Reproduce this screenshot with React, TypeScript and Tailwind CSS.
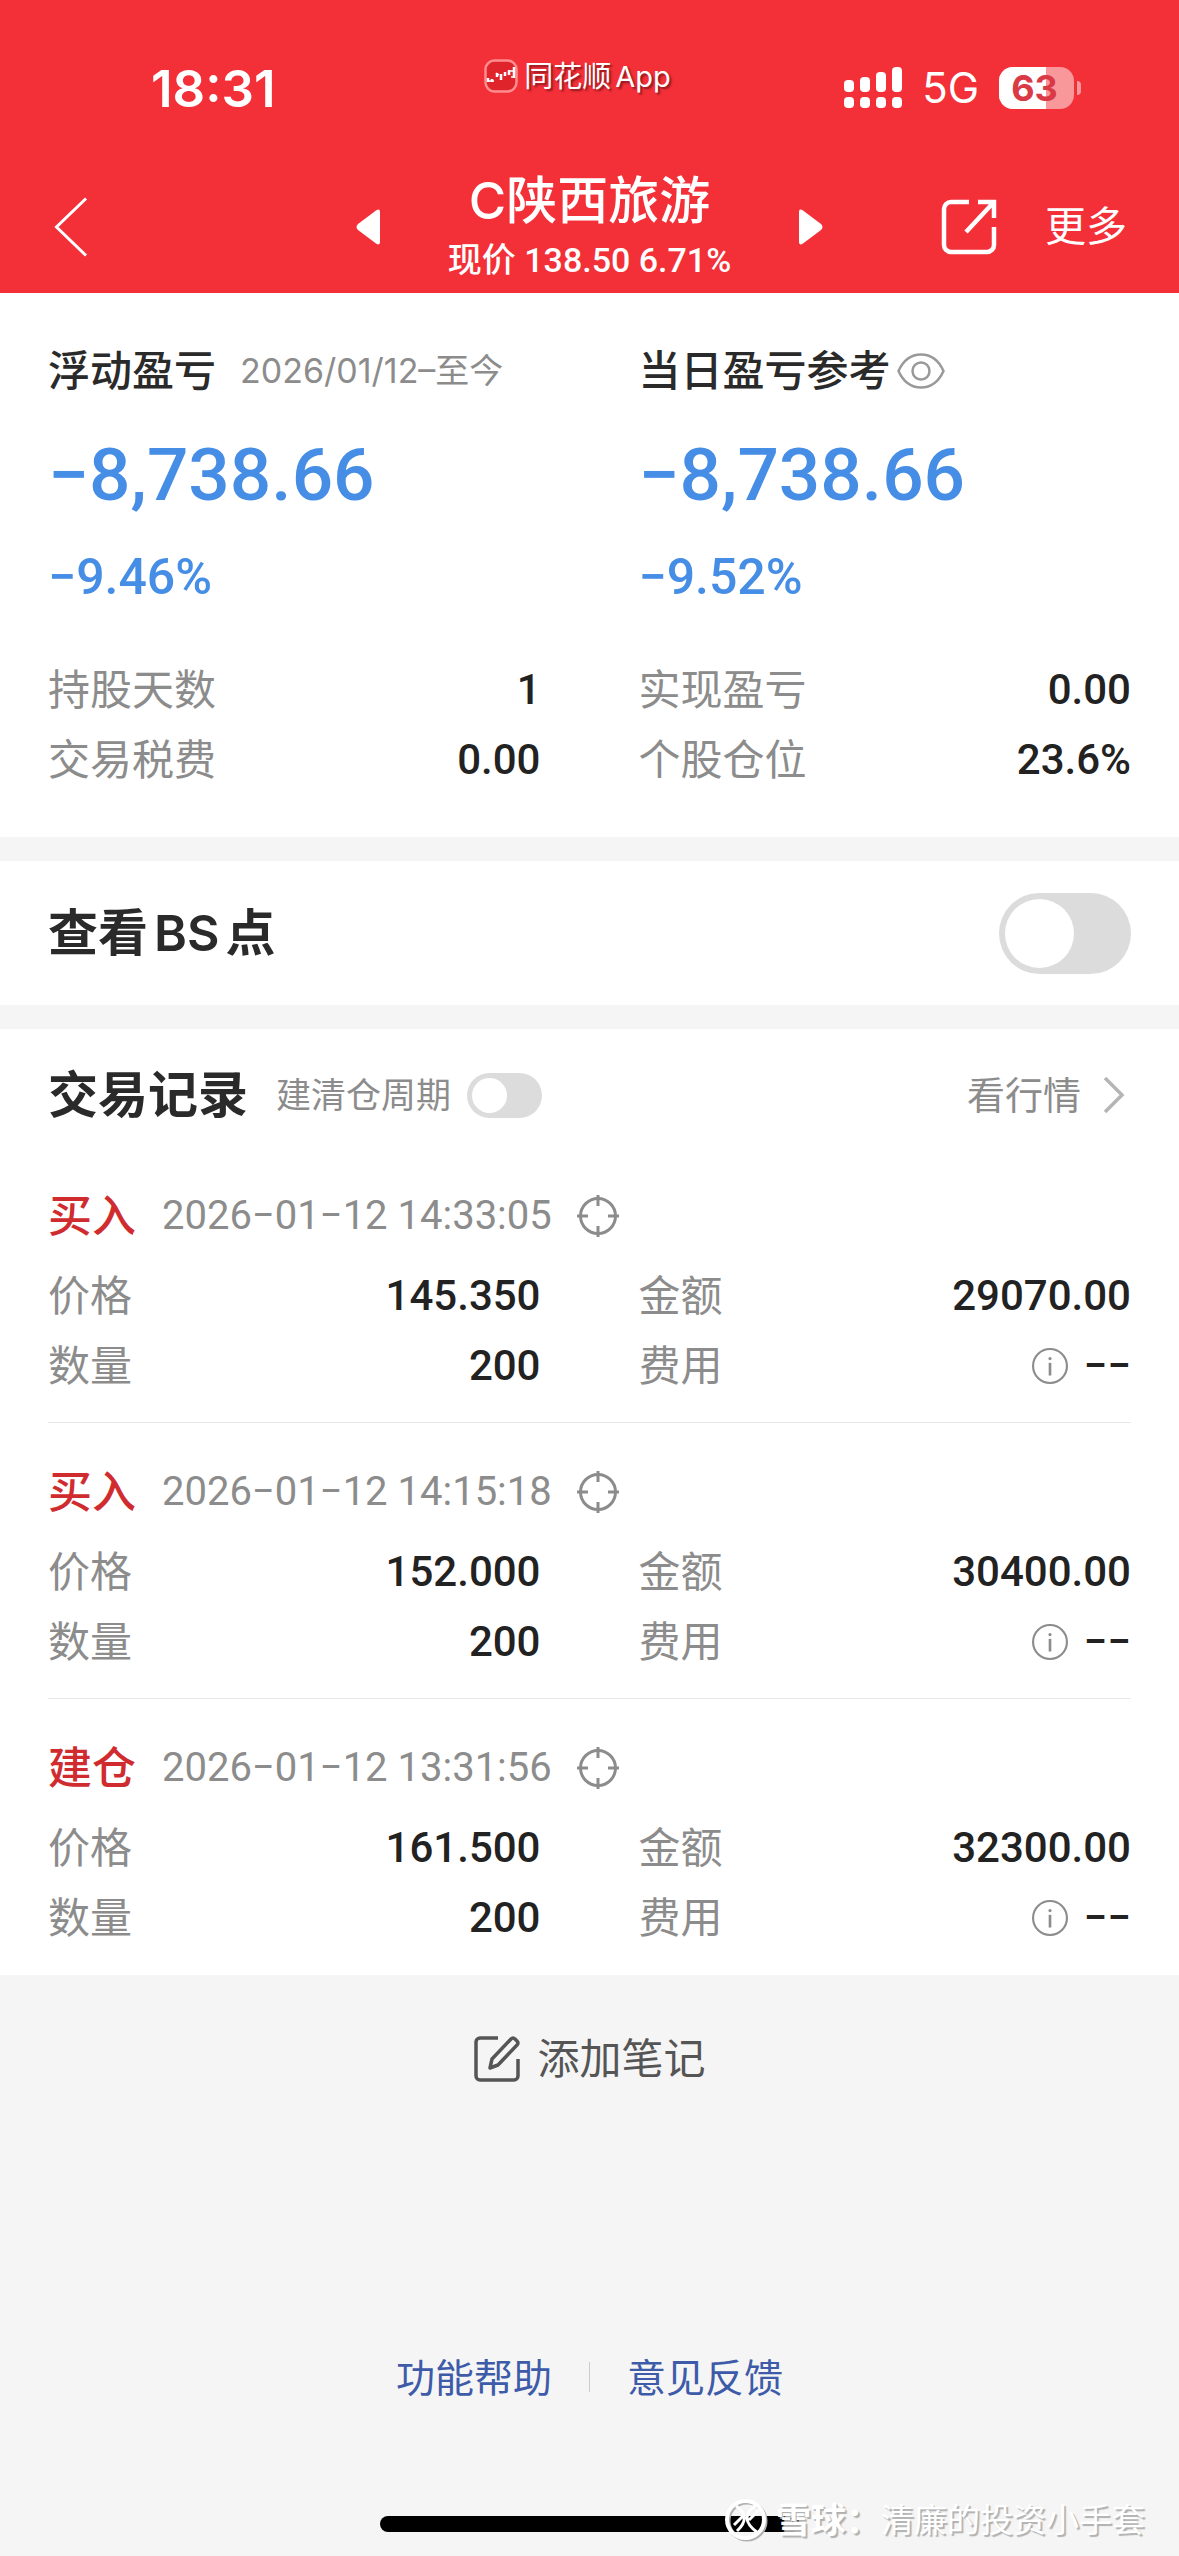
import { useState } from 'react';

interface StatItem {
  label: string;
  value: string;
}

interface TradeRecord {
  type: string;
  time: string;
  price: string;
  amount: string;
  quantity: string;
  fee: string;
}

const stats: StatItem[] = [
  { label: '持股天数', value: '1' },
  { label: '实现盈亏', value: '0.00' },
  { label: '交易税费', value: '0.00' },
  { label: '个股仓位', value: '23.6%' },
];

const records: TradeRecord[] = [
  { type: '买入', time: '2026−01−12 14:33:05', price: '145.350', amount: '29070.00', quantity: '200', fee: '−−' },
  { type: '买入', time: '2026−01−12 14:15:18', price: '152.000', amount: '30400.00', quantity: '200', fee: '−−' },
  { type: '建仓', time: '2026−01−12 13:31:56', price: '161.500', amount: '32300.00', quantity: '200', fee: '−−' },
];

function AppLogo() {
  return (
    <svg width="34" height="34" viewBox="0 0 34 34" fill="none">
      <rect x="1.5" y="1.5" width="31" height="31" rx="9" fill="#e0242b" stroke="#ff8d8f" strokeWidth="2.5" />
      <path
        d="M4 19v4M8 20v3M13 14v4M17 15v6M21 13v4M25 11v5M30 8v11"
        stroke="#fff"
        strokeWidth="2.5"
      />
      <path d="M3 22h7M12 14l3 2M24 12h5M27 18h4" stroke="#fff" strokeWidth="1.500" />
    </svg>
  );
}

function SignalIcon() {
  return (
    <svg width="58" height="42" viewBox="0 0 58 42" fill="#fff">
      <rect x="0" y="13" width="10" height="12" rx="4" />
      <rect x="16" y="10" width="10" height="15" rx="4" />
      <rect x="32" y="5" width="10" height="20" rx="4" />
      <rect x="48" y="0" width="10" height="25" rx="4" />
      <rect x="0" y="30" width="10" height="11" rx="4" />
      <rect x="16" y="30" width="10" height="11" rx="4" />
      <rect x="32" y="30" width="10" height="11" rx="4" />
      <rect x="48" y="30" width="10" height="11" rx="4" />
    </svg>
  );
}

function Battery({ level }: { level: number }) {
  return (
    <div className="flex items-center gap-[3px]">
      <div className="relative w-[75px] h-[42px] rounded-[14px] overflow-hidden bg-[#f9989b]">
        <div className="h-full bg-white" style={{ width: `${level}%` }} />
        <span className="absolute inset-0 flex items-center justify-center pr-1 text-[36px] leading-none font-bold text-[#d93a45]">
          {level}
        </span>
      </div>
      <div className="w-[4px] h-[14px] rounded-r-full bg-[#f9989b]" />
    </div>
  );
}

function EyeIcon() {
  return (
    <svg width="48" height="36" viewBox="0 0 48 36" fill="none" stroke="#999" strokeWidth="2.500">
      <path d="M1.500 18C6 8 14 1.500 24 1.500S42 8 46.500 18C42 28 34 34.500 24 34.500S6 28 1.500 18z" />
      <circle cx="24" cy="18" r="8.500" />
    </svg>
  );
}

function TargetIcon() {
  return (
    <svg width="44" height="44" viewBox="0 0 44 44" fill="none" stroke="#8c8c8c" strokeWidth="3">
      <circle cx="22" cy="22" r="17.500" />
      <path d="M22 1v11M22 32v11M1 22h11M32 22h11" />
    </svg>
  );
}

function InfoIcon() {
  return (
    <svg width="36" height="36" viewBox="0 0 34 34" fill="none" stroke="#8c8c8c" strokeWidth="2">
      <circle cx="17" cy="17" r="16" />
      <path d="M17 14v12" strokeWidth="2.500" />
      <circle cx="17" cy="10" r="1.500" fill="#8c8c8c" stroke="none" />
    </svg>
  );
}

function StatRow({ label, children }: { label: string; children: React.ReactNode }) {
  return (
    <div className="flex items-center justify-between h-[70px] text-[42px] leading-none">
      <dt className="text-[#8c8c8c]">{label}</dt>
      <dd className="flex items-center gap-4 font-[Roboto,sans-serif] font-medium text-[#222]">
        {children}
      </dd>
    </div>
  );
}

export default function App() {
  const [showPoints, setShowPoints] = useState(false);
  const [showCycle, setShowCycle] = useState(false);

  return (
    <div className="relative min-h-screen flex flex-col bg-[#f5f5f5] text-[#2a2a2a] font-[Inter,'Noto_Sans_CJK_SC',sans-serif]">
      <header className="bg-[#f32f38] text-white">
        <div className="grid grid-cols-[1fr_auto_1fr] items-center h-[176px]">
          <span className="pl-[151px] text-[51px] leading-none font-semibold">18:31</span>
          <div className="flex items-center gap-[6px] pr-6 pb-6">
            <AppLogo />
            <span className="text-[29px] leading-none [text-shadow:2px_2px_2px_#8c1a20]">
              同花顺<span className="pl-1">App</span>
            </span>
          </div>
          <div className="flex items-center justify-end gap-[20px] pr-[98px]">
            <SignalIcon />
            <span className="text-[42px] leading-none">5G</span>
            <Battery level={63} />
          </div>
        </div>

        <nav className="grid grid-cols-[1fr_auto_1fr] items-center h-[117px] pb-4">
          <button type="button" aria-label="返回" className="justify-self-start pl-[54px]">
            <svg width="34" height="60" viewBox="0 0 34 60" fill="none" stroke="#fff" strokeWidth="3">
              <path d="M32 1.500L2.500 30L32 58.500" />
            </svg>
          </button>
          <div className="flex items-center gap-[68px]">
            <button type="button" aria-label="上一只">
              <svg width="24" height="36" viewBox="0 0 24 36" fill="#fff">
                <path d="M24 3v30q0 4-4 1.500L2 21q-3-3 0-6L20 1.500Q24-1 24 3z" />
              </svg>
            </button>
            <div className="flex flex-col items-center -my-4">
              <h1 className="text-[51px] leading-[66px] font-medium">C陕西旅游</h1>
              <p className="text-[34px] leading-[52px] font-medium font-[Roboto,'Noto_Sans_CJK_SC',sans-serif]">
                现价 138.50 6.71%
              </p>
            </div>
            <button type="button" aria-label="下一只">
              <svg width="24" height="36" viewBox="0 0 24 36" fill="#fff">
                <path d="M0 3v30q0 4 4 1.500L22 21q3-3 0-6L4 1.500Q0-1 0 3z" />
              </svg>
            </button>
          </div>
          <div className="flex items-center justify-end gap-[48px] pr-[52px]">
            <button type="button" aria-label="分享">
              <svg width="56" height="56" viewBox="0 0 56 56" fill="none" stroke="#fff" strokeWidth="4.500">
                <path d="M28 3H10a7 7 0 0 0-7 7v36a7 7 0 0 0 7 7h36a7 7 0 0 0 7-7V28" />
                <path d="M37 3h16v16M53 3L25 33" />
              </svg>
            </button>
            <button type="button" className="text-[41px] leading-none">更多</button>
          </div>
        </nav>
      </header>

      <section className="bg-white px-12 pt-12 pb-[42px]">
        <div className="grid grid-cols-2 gap-x-[98px]">
          <div>
            <div className="flex items-center gap-6 h-[60px]">
              <h2 className="text-[42px] leading-none font-medium">浮动盈亏</h2>
              <span className="text-[34px] leading-none text-[#8c8c8c]">2026/01/12–至今</span>
            </div>
            <p className="mt-[30px] text-[73px] leading-[88px] font-medium text-[#468ee5] font-[Roboto,sans-serif]">−8,738.66</p>
            <p className="mt-7 text-[50px] leading-[60px] font-medium text-[#468ee5] font-[Roboto,sans-serif]">−9.46%</p>
          </div>
          <div>
            <div className="flex items-center gap-[6px] h-[60px]">
              <h2 className="text-[42px] leading-none font-medium">当日盈亏参考</h2>
              <button type="button" aria-label="显示或隐藏金额">
                <EyeIcon />
              </button>
            </div>
            <p className="mt-[30px] text-[73px] leading-[88px] font-medium text-[#468ee5] font-[Roboto,sans-serif]">−8,738.66</p>
            <p className="mt-7 text-[50px] leading-[60px] font-medium text-[#468ee5] font-[Roboto,sans-serif]">−9.52%</p>
          </div>
        </div>
        <dl className="grid grid-cols-2 gap-x-[98px] mt-12">
          {stats.map((item) => (
            <StatRow key={item.label} label={item.label}>
              {item.value}
            </StatRow>
          ))}
        </dl>
      </section>

      <section className="flex items-center justify-between mt-6 h-36 px-12 bg-white">
        <label htmlFor="bs-points" className="text-[50px] leading-none font-semibold">
          查看<span className="px-[6px]">BS</span>点
        </label>
        <input
          id="bs-points"
          type="checkbox"
          checked={showPoints}
          onChange={(e) => setShowPoints(e.target.checked)}
          className="appearance-none flex items-center w-[132px] h-[81px] px-[6px] rounded-full bg-[#dcdcdc] checked:bg-[#f32f38] checked:justify-end before:block before:size-[69px] before:rounded-full before:bg-white"
        />
      </section>

      <section className="mt-6 bg-white px-12">
        <div className="flex items-center justify-between h-[118px] pt-[14px]">
          <div className="flex items-center">
            <h2 className="text-[50px] leading-none font-semibold">交易记录</h2>
            <label htmlFor="cycle" className="ml-7 text-[35px] leading-none text-[#8c8c8c]">
              建清仓周期
            </label>
            <input
              id="cycle"
              type="checkbox"
              checked={showCycle}
              onChange={(e) => setShowCycle(e.target.checked)}
              className="appearance-none flex items-center ml-4 w-[75px] h-[45px] px-[5px] rounded-full bg-[#dcdcdc] checked:bg-[#f32f38] checked:justify-end before:block before:size-[35px] before:rounded-full before:bg-white"
            />
          </div>
          <a href="#quote" className="flex items-center gap-[22px] pr-[6px] text-[38px] leading-none text-[#8c8c8c]">
            看行情
            <svg width="22" height="38" viewBox="0 0 22 38" fill="none" stroke="#b5b5b5" strokeWidth="3.500">
              <path d="M2 2l17 17L2 36" />
            </svg>
          </a>
        </div>

        {records.map((record) => (
          <article key={record.time} className="h-[276px] pt-[39px] border-b border-[#e8e8e8] last:border-b-0">
            <div className="flex items-center h-[60px] mb-[15px]">
              <h3 className="text-[44px] leading-none font-medium text-[#d02c30]">{record.type}</h3>
              <time className="ml-[26px] text-[40px] leading-none text-[#8c8c8c] font-[Roboto,sans-serif]">
                {record.time}
              </time>
              <button type="button" aria-label="定位" className="ml-6">
                <TargetIcon />
              </button>
            </div>
            <dl className="grid grid-cols-2 gap-x-[98px]">
              <StatRow label="价格">{record.price}</StatRow>
              <StatRow label="金额">{record.amount}</StatRow>
              <StatRow label="数量">{record.quantity}</StatRow>
              <StatRow label="费用">
                <InfoIcon />
                {record.fee}
              </StatRow>
            </dl>
          </article>
        ))}
      </section>

      <button type="button" className="flex items-center justify-center gap-4 mt-[52px] h-16 text-[42px] leading-none text-[#555]">
        <svg width="48" height="48" viewBox="0 0 48 48" fill="none" stroke="#555" strokeWidth="3.500" strokeLinejoin="round">
          <path d="M25 3H7a4 4 0 0 0-4 4v34a4 4 0 0 0 4 4h34a4 4 0 0 0 4-4V24" />
          <path d="M17 33l2-9L38 4q2-2 4 0l2 2q2 2 0 4L25 30z" />
        </svg>
        添加笔记
      </button>

      <footer className="flex flex-col items-center mt-auto pb-6">
        <div className="flex items-center gap-[37px] h-16 mb-[107px] text-[39px] leading-none text-[#3d5ba9]">
          <a href="#help">功能帮助</a>
          <span className="w-px h-[30px] bg-[#ccc]" />
          <a href="#feedback">意见反馈</a>
        </div>
        <div className="w-[420px] h-4 rounded-full bg-black" />
      </footer>

      <div className="absolute right-[34px] bottom-[14px] flex items-center text-white [text-shadow:2px_2px_1px_#b0b0b0]">
        <svg width="44" height="44" viewBox="0 0 44 44" fill="none" stroke="#b0b0b0" strokeWidth="4">
          <circle cx="23" cy="23" r="18.500" />
          <circle cx="21.500" cy="21.500" r="18.500" stroke="#fff" />
          <path d="M12 8q16 11 1 25M32 7q-19 13 2 28M10 27l10-10M25 22l10-10" stroke="#fff" strokeWidth="3" />
        </svg>
        <span className="ml-2 text-[35px] leading-none font-bold">雪球：</span>
        <span className="text-[33px] leading-none">清廉的投资小手套</span>
      </div>
    </div>
  );
}
